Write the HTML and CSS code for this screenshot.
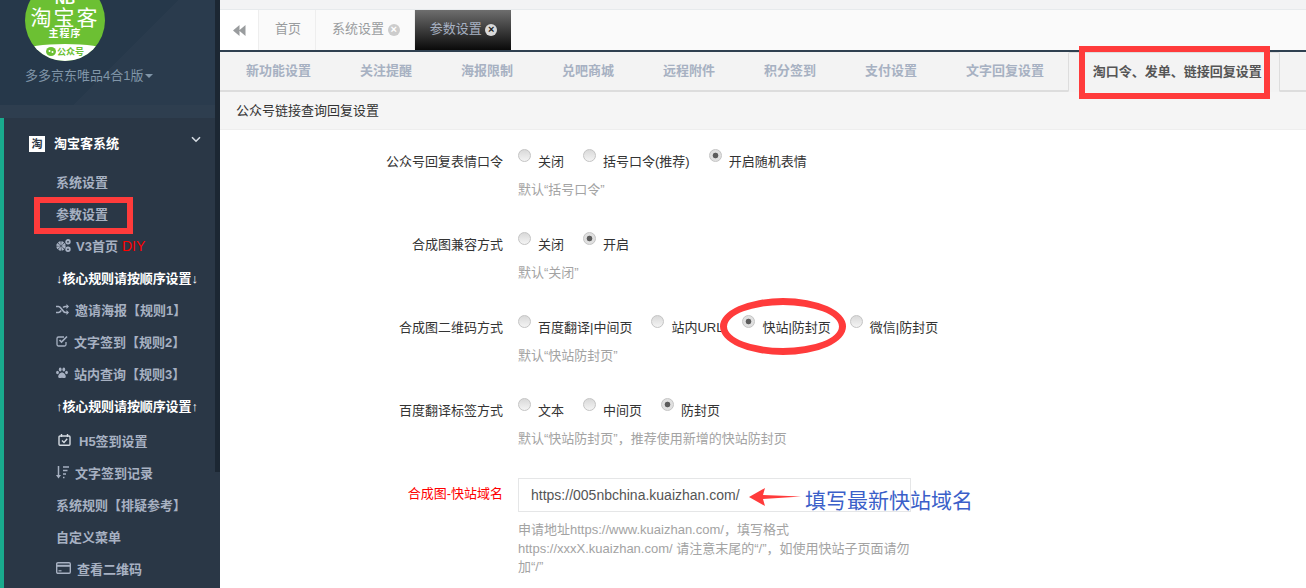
FILE: index.html

```html
<!DOCTYPE html>
<html lang="zh">
<head>
    <meta charset="UTF-8">
    <meta name="viewport" content="width=device-width, initial-scale=1.0">
    <link rel="stylesheet" href="styles.css">
</head>
<body>
    <aside class="sidebar">
        <div class="profile">
            <div class="logo">
                <span class="logo-nb">NB</span>
                <span class="logo-name">淘宝客</span>
                <span class="logo-sub">主程序</span>
                <span class="logo-foot">
                    <svg width="10" height="9" viewBox="0 0 10 9"><ellipse cx="5" cy="4.500" rx="5" ry="4.500" fill="#6cc033"/><circle cx="3.500" cy="4" r="1" fill="#ffffff"/><circle cx="6.500" cy="5" r="1" fill="#ffffff"/></svg>公众号
                </span>
            </div>
            <div class="profile-name">多多京东唯品4合1版<i class="caret"></i></div>
        </div>
        <div class="band"></div>
        <nav class="menu">
            <div class="menu-head">
                <span class="menu-icon">淘</span>
                <span>淘宝客系统</span>
                <svg class="chevron" width="10" height="7" viewBox="0 0 10 7"><path d="M1 1.2 5 5.2 9 1.2" fill="none" stroke="#d5dbe2" stroke-width="1.6"/></svg>
            </div>
            <a class="item">系统设置</a>
            <a class="item">参数设置</a>
            <a class="item">
                <svg class="ico gears" width="15" height="13" viewBox="0 0 15 13"><circle cx="5" cy="7" r="3.200" fill="none" stroke="#a7b1c2" stroke-width="3" stroke-dasharray="1.900 .6"/><circle cx="5" cy="7" r="1.800" fill="#a7b1c2"/><circle cx="5" cy="7" r=".9" fill="#2a3746"/><circle cx="12" cy="2.800" r="1.800" fill="none" stroke="#a7b1c2" stroke-width="1.800"/><circle cx="12" cy="10.300" r="1.800" fill="none" stroke="#a7b1c2" stroke-width="1.800"/></svg>
                V3首页 <span class="diy">DIY</span>
            </a>
            <a class="item notice">↓核心规则请按顺序设置↓</a>
            <a class="item">
                <svg class="ico" width="13" height="11" viewBox="0 0 13 11"><path d="M0 2.5h2.5c3 0 4 6 7 6H11M0 8.5h2.5c1.2 0 2-1 2.7-2M7 3.5c.7-.6 1.500-1 2.500-1H11" fill="none" stroke="#a7b1c2" stroke-width="1.600"/><path d="M10.500 0 13 2.500 10.500 5zM10.500 6 13 8.500 10.500 11z" fill="#a7b1c2"/></svg>
                邀请海报【规则1】
            </a>
            <a class="item">
                <svg class="ico" width="12" height="12" viewBox="0 0 12 12"><path d="M10 7v2.500A1.500 1.500 0 0 1 8.500 11h-6A1.500 1.500 0 0 1 1 9.500v-6A1.500 1.500 0 0 1 2.500 2H8" fill="none" stroke="#a7b1c2" stroke-width="1.300"/><path d="M3.500 5 5.500 7 11 1.500" fill="none" stroke="#a7b1c2" stroke-width="1.700"/></svg>
                文字签到【规则2】
            </a>
            <a class="item">
                <svg class="ico" width="12" height="12" viewBox="0 0 12 12" fill="#a7b1c2"><ellipse cx="1.500" cy="5.500" rx="1.400" ry="1.800"/><ellipse cx="4.200" cy="2.500" rx="1.400" ry="2"/><ellipse cx="7.800" cy="2.500" rx="1.400" ry="2"/><ellipse cx="10.500" cy="5.500" rx="1.400" ry="1.800"/><path d="M6 5.500c-2 0-3.800 2.300-3.800 4.300 0 1.500 1.800 1.400 3.800 1 2 .4 3.800.5 3.800-1 0-2-1.800-4.300-3.800-4.300z"/></svg>
                站内查询【规则3】
            </a>
            <a class="item notice">↑核心规则请按顺序设置↑</a>
            <a class="item h5">
                <svg class="ico" width="13" height="12" viewBox="0 0 13 12"><rect x="1" y="2" width="11" height="9.200" rx="1" fill="none" stroke="#d5dbe2" stroke-width="1.400"/><path d="M3.500 0v3M9.500 0v3" stroke="#d5dbe2" stroke-width="1.400"/><path d="M4 6.500 6 8.500 9.200 4.800" fill="none" stroke="#d5dbe2" stroke-width="1.400"/></svg>
                H5签到设置
            </a>
            <a class="item">
                <svg class="ico" width="13" height="13" viewBox="0 0 13 13"><path d="M2.500 0v10" stroke="#a7b1c2" stroke-width="1.500"/><path d="M0 9h5l-2.500 3.500z" fill="#a7b1c2"/><path d="M7 1h6M7 4.500h4.500M7 8h3M7 11.500h1.500" stroke="#a7b1c2" stroke-width="1.500"/></svg>
                文字签到记录
            </a>
            <a class="item">系统规则【排疑参考】</a>
            <a class="item">自定义菜单</a>
            <a class="item">
                <svg class="ico" width="15" height="12" viewBox="0 0 15 12"><rect x=".7" y=".7" width="13.600" height="10.600" rx="1.200" fill="none" stroke="#a7b1c2" stroke-width="1.400"/><path d="M1 3.800h13" stroke="#a7b1c2" stroke-width="2"/><path d="M2.500 8.800h3" stroke="#a7b1c2" stroke-width="1.200"/></svg>
                查看二维码
            </a>
        </nav>
        <div class="scrollbar"></div>
    </aside>

    <main class="main">
        <div class="top-strip"></div>
        <div class="page-tabs">
            <a class="page-back">
                <svg width="13" height="11" viewBox="0 0 13 11"><path d="M6.500 0v11L0 5.500zM12.500 0v11L6 5.500z" fill="#999c9e"/></svg>
            </a>
            <a class="page-tab">首页</a>
            <a class="page-tab">系统设置 <i class="tab-close">×</i></a>
            <a class="page-tab current">参数设置 <i class="tab-close">×</i></a>
        </div>
        <div class="nav-tabs">
            <a>新功能设置</a>
            <a>关注提醒</a>
            <a>海报限制</a>
            <a>兑吧商城</a>
            <a>远程附件</a>
            <a>积分签到</a>
            <a>支付设置</a>
            <a>文字回复设置</a>
            <a class="active">淘口令、发单、链接回复设置</a>
        </div>
        <div class="panel-heading">公众号链接查询回复设置</div>

        <form class="form">
            <div class="row">
                <label class="row-label">公众号回复表情口令</label>
                <div class="row-body">
                    <div class="radios">
                        <label class="radio"><input type="radio" name="a">关闭</label>
                        <label class="radio"><input type="radio" name="a">括号口令(推荐)</label>
                        <label class="radio"><input type="radio" name="a" checked>开启随机表情</label>
                    </div>
                    <div class="help">默认“括号口令”</div>
                </div>
            </div>
            <div class="row">
                <label class="row-label">合成图兼容方式</label>
                <div class="row-body">
                    <div class="radios">
                        <label class="radio"><input type="radio" name="b">关闭</label>
                        <label class="radio"><input type="radio" name="b" checked>开启</label>
                    </div>
                    <div class="help">默认“关闭”</div>
                </div>
            </div>
            <div class="row">
                <label class="row-label">合成图二维码方式</label>
                <div class="row-body">
                    <div class="radios">
                        <label class="radio"><input type="radio" name="c">百度翻译|中间页</label>
                        <label class="radio"><input type="radio" name="c">站内URL</label>
                        <label class="radio"><input type="radio" name="c" checked>快站|防封页</label>
                        <label class="radio"><input type="radio" name="c">微信|防封页</label>
                    </div>
                    <div class="help">默认“快站防封页”</div>
                </div>
            </div>
            <div class="row">
                <label class="row-label">百度翻译标签方式</label>
                <div class="row-body">
                    <div class="radios">
                        <label class="radio"><input type="radio" name="d">文本</label>
                        <label class="radio"><input type="radio" name="d">中间页</label>
                        <label class="radio"><input type="radio" name="d" checked>防封页</label>
                    </div>
                    <div class="help">默认“快站防封页”，推荐使用新增的快站防封页</div>
                </div>
            </div>
            <div class="row">
                <label class="row-label required">合成图-快站域名</label>
                <div class="row-body">
                    <input class="text-input" type="text" value="https://005nbchina.kuaizhan.com/">
                    <div class="help help-input">申请地址https://www.kuaizhan.com/，填写格式https://xxxX.kuaizhan.com/ 请注意末尾的“/”，如使用快站子页面请勿加“/”</div>
                </div>
            </div>
        </form>
    </main>

    <!-- red marks drawn over the screenshot -->
    <div class="mark mark-side"></div>
    <div class="mark mark-tab"></div>
    <div class="mark-ring"></div>
    <svg class="mark-arrow" width="52" height="18" viewBox="0 0 52 18"><path d="M0 9 16 0 14 7 52 8.500 14 11 16 18z" fill="#ff3b3b"/></svg>
    <div class="mark-note">填写最新快站域名</div>
</body>
</html>
```

FILE: styles.css

```css
* {
    box-sizing: border-box;
}
html, body {
    height: 100%;
}
body {
    margin: 0;
    display: flex;
    overflow: hidden;
    position: relative;
    background-color: #ffffff;
    color: #676a6c;
    font-family: "Liberation Sans", "Noto Sans CJK SC", sans-serif;
    font-size: 13px;
}
a {
    color: inherit;
    text-decoration: none;
}

/* sidebar */
.sidebar {
    width: 220px;
    height: 588px;
    flex-shrink: 0;
    position: relative;
    overflow: hidden;
    background-color: #2a3746;
}
.profile {
    display: flow-root;
    height: 105px;
    background: linear-gradient(135deg, #26384a 0%, #26384a 55%, #2a3b4d 55%, #2a3b4d 100%);
}
.logo {
    width: 80px;
    height: 81px;
    margin: -20px 0 0 25px;
    border-radius: 50%;
    overflow: hidden;
    background-color: #6cc033;
    color: #ffffff;
    display: flex;
    flex-direction: column;
    align-items: center;
    font-weight: bold;
    position: relative;
}
.logo-nb {
    font-size: 14px;
    line-height: 14px;
    margin-top: 12px;
}
.logo-name {
    font-size: 21px;
    line-height: 24px;
    letter-spacing: 2px;
    font-weight: normal;
}
.logo-sub {
    font-size: 10px;
    line-height: 13px;
    margin-top: -3px;
    letter-spacing: 1px;
}
.logo-foot {
    position: absolute;
    left: 0;
    right: 0;
    bottom: 0;
    height: 17px;
    padding-top: 2px;
    border-radius: 50% 50% 0 0 / 6px 6px 0 0;
    background-color: #ffffff;
    color: #6cc033;
    font-size: 9px;
    line-height: 12px;
    text-align: center;
}
.logo-foot svg {
    vertical-align: -1px;
    margin-right: 1px;
}
.profile-name {
    margin: 7px 0 0 25px;
    color: #8095a8;
    font-size: 13px;
    line-height: 16px;
}
.caret {
    display: inline-block;
    margin-left: 2px;
    vertical-align: 2px;
    border-top: 4px solid #8095a8;
    border-left: 4px solid transparent;
    border-right: 4px solid transparent;
}
.band {
    height: 13px;
    background-color: #2e3e4f;
}
.menu {
    height: 470px;
    border-left: 4px solid #19aa8d;
    color: #a7b1c2;
    font-weight: bold;
}
.menu-head {
    height: 47px;
    padding: 17px 0 0 25px;
    display: flex;
    align-items: flex-start;
    gap: 9px;
    color: #ffffff;
    line-height: 18px;
    position: relative;
}
.menu-icon {
    width: 16px;
    height: 16px;
    margin-top: 1px;
    background-color: #ffffff;
    color: #2a3746;
    font-size: 11px;
    line-height: 16px;
    text-align: center;
}
.chevron {
    position: absolute;
    top: 18px;
    left: 187px;
}
.item {
    height: 32px;
    padding-left: 52px;
    display: flex;
    align-items: center;
    gap: 6px;
    white-space: nowrap;
}
.ico {
    flex-shrink: 0;
}
.gears {
    margin-right: -1px;
}
.diy {
    color: #ff0000;
    font-size: 14px;
    font-weight: normal;
    margin: 2px 0 0 -2px;
}
.notice {
    color: #ffffff;
    letter-spacing: -0.1px;
}
.h5 {
    height: 35px;
    padding: 3px 0 0 54px;
    gap: 8px;
}
.scrollbar {
    position: absolute;
    top: 0;
    right: 0;
    width: 5px;
    height: 472px;
    background-color: #1c2733;
}

/* main column */
.main {
    flex: 1;
    min-width: 0;
}
.top-strip {
    height: 10px;
    background-color: #f3f3f4;
    border-bottom: 1px solid #e7eaec;
}
.page-tabs {
    height: 42px;
    display: flex;
    background-color: #fafafa;
    border-bottom: 2px solid #2f4050;
}
.page-back {
    width: 39px;
    display: flex;
    align-items: center;
    justify-content: center;
    background-color: #ffffff;
    border-right: 1px solid #eeeeee;
}
.page-tab {
    padding: 0 14px 0 16px;
    border-right: 1px solid #eeeeee;
    color: #999c9e;
    line-height: 38px;
    white-space: nowrap;
}
.page-tab.current {
    padding: 0 14px 0 15px;
    border-right: 0;
    background: linear-gradient(#6e6e6e, #0a0a0a);
    color: #a7b1c2;
}
.tab-close {
    display: inline-block;
    width: 12px;
    height: 12px;
    border-radius: 50%;
    background-color: #cccccc;
    color: #ffffff;
    font-size: 11px;
    font-style: normal;
    font-weight: bold;
    line-height: 11px;
    text-align: center;
    vertical-align: 0;
}
.current .tab-close {
    background-color: #d9d9d9;
    color: #222222;
}
.nav-tabs {
    height: 40px;
    display: flex;
    background-color: #f3f3f3;
    border-bottom: 2px solid #dddddd;
}
.nav-tabs a {
    padding: 0 24.5px;
    color: #a7b1c2;
    font-weight: bold;
    line-height: 38px;
    white-space: nowrap;
}
.nav-tabs a:first-child {
    padding-left: 26px;
}
.nav-tabs .active {
    height: 40px;
    margin-left: -1px;
    padding: 0 17px 0 24px;
    background-color: #f3f3f3;
    border: 1px solid #dddddd;
    border-bottom-color: #f3f3f3;
    border-radius: 2px 2px 0 0;
    color: #555555;
}
.panel-heading {
    height: 38px;
    padding: 0 16px;
    background-color: #f5f5f5;
    border-bottom: 1px solid #eeeeee;
    color: #333333;
    line-height: 38px;
}

/* form */
.form {
    padding-top: 19px;
}
.row {
    display: flex;
    margin-bottom: 33px;
}
.row:nth-child(4) {
    margin-bottom: 30px;
}
.row-label {
    width: 283px;
    flex-shrink: 0;
    margin-right: 15px;
    color: #333333;
    line-height: 26px;
    text-align: right;
}
.row-label.required {
    color: #ff0000;
    line-height: 32px;
}
.row-body {
    width: 393px;
}
.radios {
    height: 26px;
    display: flex;
    white-space: nowrap;
}
.radio {
    display: flex;
    margin-right: 19px;
    color: #333333;
    line-height: 26px;
}
.radio input {
    appearance: none;
    width: 13px;
    height: 13px;
    margin: 0 7px 0 0;
    border: 1px solid #c4c4c4;
    border-radius: 50%;
    background: linear-gradient(#d9d9d9, #f4f4f4);
}
.radio input:checked {
    background: radial-gradient(circle, #5c5c5c 0, #5c5c5c 2.500px, #e0e0e0 3.200px);
}
.help {
    margin-top: 6px;
    color: #a3a3a3;
    line-height: 18px;
}
.help-input {
    margin-top: 9px;
    line-height: 18.500px;
}
.text-input {
    display: block;
    width: 393px;
    height: 34px;
    padding: 0 12px;
    border: 1px solid #e5e6e7;
    background-color: #ffffff;
    color: #555555;
    font-family: inherit;
    font-size: 14px;
}

/* annotations */
.mark {
    position: absolute;
    border: 6px solid #ff3b3b;
}
.mark-side {
    left: 34px;
    top: 197px;
    width: 99px;
    height: 37px;
}
.mark-tab {
    left: 1079px;
    top: 46px;
    width: 191px;
    height: 53px;
}
.mark-ring {
    position: absolute;
    left: 720px;
    top: 298px;
    width: 126px;
    height: 57px;
    border: 7px solid #ff3b3b;
    border-radius: 50%;
}
.mark-arrow {
    position: absolute;
    left: 749px;
    top: 488px;
}
.mark-note {
    position: absolute;
    left: 805px;
    top: 486px;
    color: #3b5fc9;
    font-size: 21px;
    line-height: 30px;
    white-space: nowrap;
}
```
